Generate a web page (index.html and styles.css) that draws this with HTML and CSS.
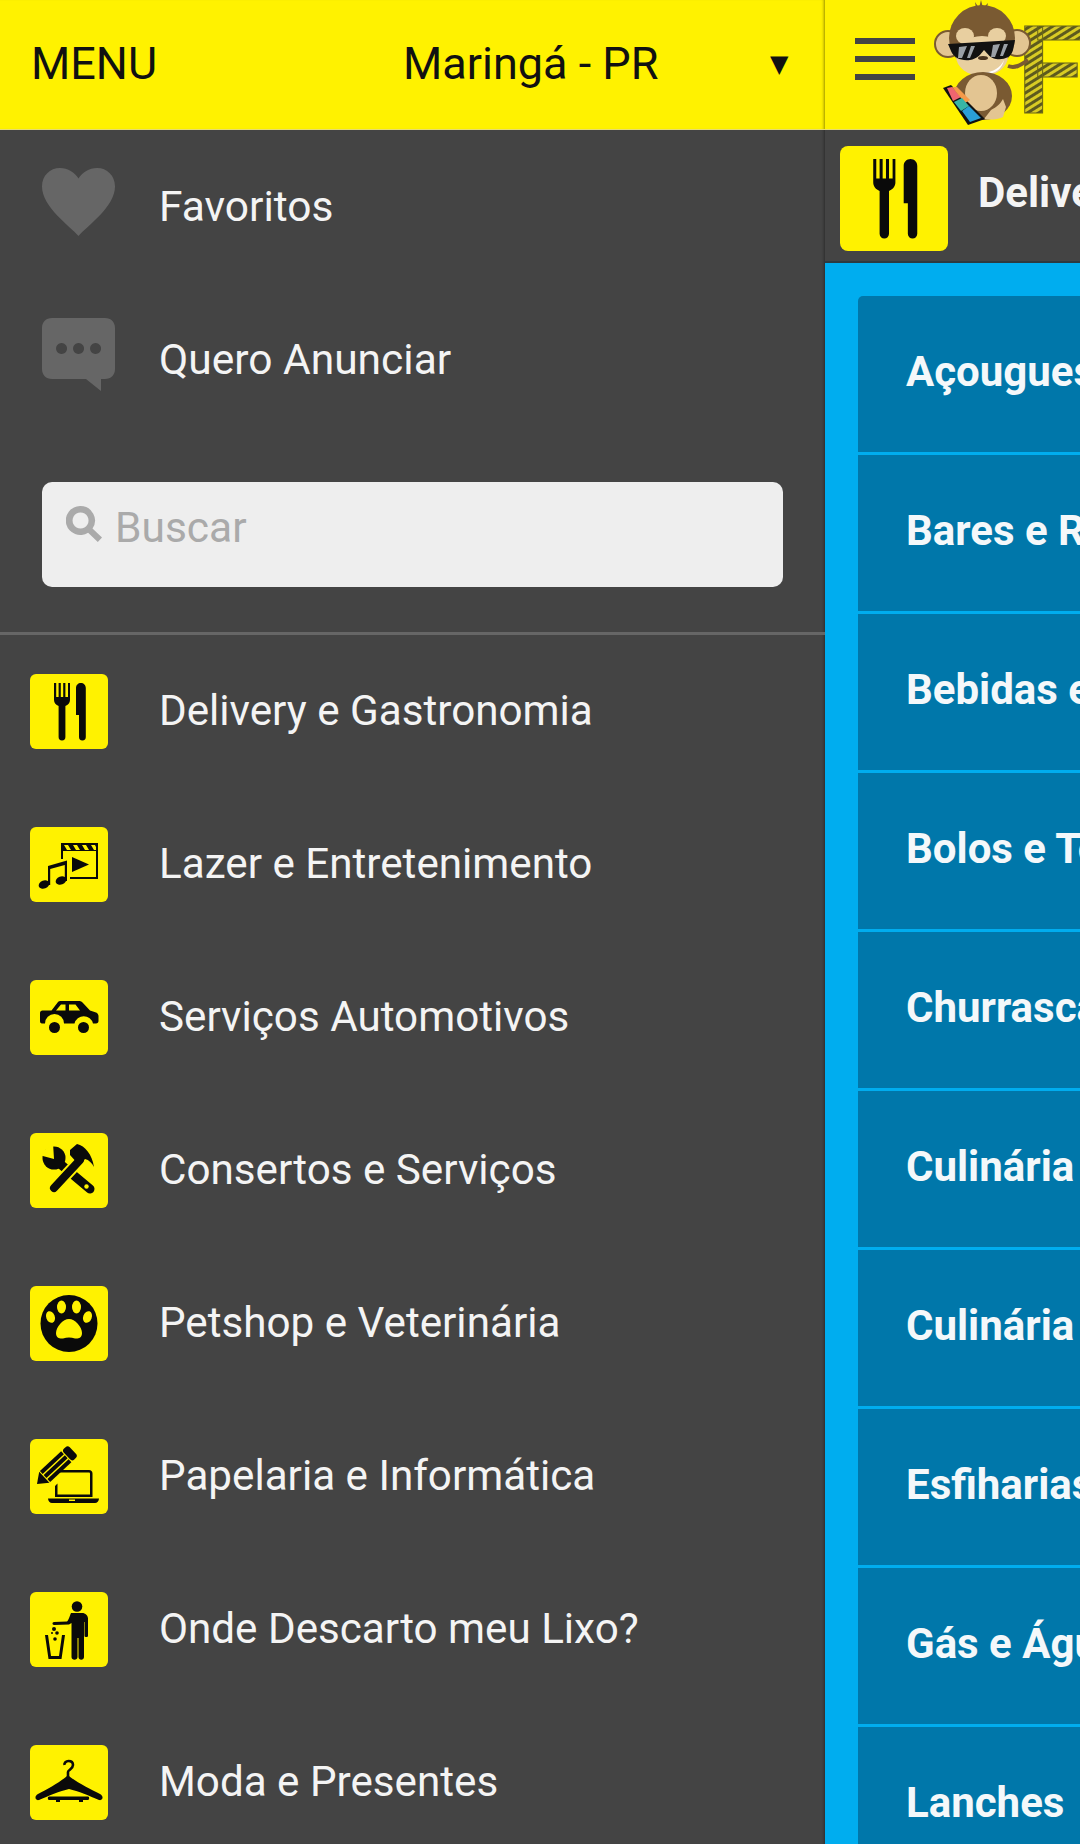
FILE: index.html
```html
<!DOCTYPE html>
<html lang="pt-BR">
<head>
<meta charset="utf-8">
<title>Menu</title>
<link rel="stylesheet" href="styles.css">
</head>
<body>
<svg class="defs" width="0" height="0" aria-hidden="true">
  <defs>
    <symbol id="i-food" viewBox="0 0 78 75">
      <path d="M24 9h2.200v14h2.400V9h2.200v14h2.400V9h2.200v14h2.600V9H40v17c0 3-2 5-4.600 6v31a3.400 3.400 0 0 1-6.800 0V32c-2.600-1-4.600-3-4.600-6z"/>
      <path d="M46 14c0-3 2.200-5 4.900-5s4.900 2 4.900 5v49a3.400 3.400 0 0 1-6.800 0V41h-3z"/>
    </symbol>
    <symbol id="i-media" viewBox="0 0 78 75">
      <path fill-rule="evenodd" d="M31 16h37v36H40v-2h26V24H33v8h-2zM34 18l3 5h4l-3-5zM43 18l3 5h4l-3-5zM52 18l3 5h4l-3-5zM61 18l3 5h2v-3l-1-2z"/>
      <path d="M42 30l17 7.500-17 7.500z"/>
      <path d="M18 39l19-5.500V54h-2.200V38l-14.600 4v16H18z"/>
      <ellipse cx="14" cy="57.500" rx="5.500" ry="4" transform="rotate(-20 14 57.500)"/>
      <ellipse cx="31" cy="53.500" rx="5.500" ry="4" transform="rotate(-20 31 53.500)"/>
    </symbol>
    <symbol id="i-car" viewBox="0 0 78 75">
      <path fill-rule="evenodd" d="M10 33c0-1.500 1-2.500 2.500-2.500h9L28 22c.800-.800 1.500-1 3-1h18c1.500 0 2.500.500 3.500 1.500l7.500 8 6 2c1.500.500 2.500 2 2.500 3.500v5c0 1.500-1 2.500-2.500 2.500h-3a9.500 9.500 0 0 0-18.500 0H34a9.500 9.500 0 0 0-19 0h-3c-1.500 0-2-1-2-2.500zM26 30.500h9.500V24.500H31zM39 24.500v6h11l-4.500-6z"/>
      <circle cx="24.500" cy="47.500" r="5.500"/>
      <circle cx="53.500" cy="47.500" r="5.500"/>
    </symbol>
    <symbol id="i-tools" viewBox="0 0 78 75">
      <path d="M29 30l31 26" stroke="#0a0a0a" stroke-width="9" stroke-linecap="round"/>
      <circle cx="24" cy="25" r="11.500"/>
      <path d="M24 26l-1-16-14 12z" fill="#fff200"/>
      <circle cx="56.500" cy="53.500" r="2.200" fill="#fff200"/>
      <path d="M50 27L24 55" stroke="#fff200" stroke-width="12"/>
      <path d="M50 27L24 55" stroke="#0a0a0a" stroke-width="8" stroke-linecap="round"/>
      <path d="M40 17l7-6c8 2 15 10 17 23-2-4-5-7-9-8l-6 6-9-10z"/>
    </symbol>
    <symbol id="i-paw" viewBox="0 0 78 75">
      <circle cx="39" cy="37.500" r="28.500"/>
      <g fill="#fff200">
        <path d="M39 33c6 0 13 8 13 14 0 5-4 6-7 5.500-2-.4-4-1-6-1s-4 .6-6 1c-3 .5-7-.5-7-5.500 0-6 7-14 13-14z"/>
        <ellipse cx="31.500" cy="21" rx="4.500" ry="6.500"/>
        <ellipse cx="46.500" cy="21" rx="4.500" ry="6.500"/>
        <ellipse cx="20.500" cy="31" rx="4.300" ry="6" transform="rotate(-20 20.500 31)"/>
        <ellipse cx="57.500" cy="31" rx="4.300" ry="6" transform="rotate(20 57.500 31)"/>
      </g>
    </symbol>
    <symbol id="i-office" viewBox="0 0 78 75">
      <g transform="translate(7 45) rotate(-43)">
        <path d="M0 0l10-7.500v15z"/>
        <rect x="11" y="-7.500" width="29" height="4"/>
        <rect x="11" y="-2" width="29" height="4"/>
        <rect x="11" y="3.500" width="29" height="4"/>
        <rect x="41" y="-7.500" width="8" height="15" rx="3"/>
      </g>
      <path fill-rule="evenodd" d="M28 31h31c2 0 3.500 1.500 3.500 3.500V58H25V47l2.500-2.500v11h32.500V34.500c0-.5-.5-1-1-1H27.500z"/>
      <path fill-rule="evenodd" d="M18 59.500h51c0 2.500-2 4.500-4 4.500H22c-2 0-4-2-4-4.500zM39 60.500v1.500h6v-1.500z"/>
    </symbol>
    <symbol id="i-trash" viewBox="0 0 78 75">
      <circle cx="47" cy="14.500" r="5.300"/>
      <path d="M41 21h11c3.500 0 6 2.500 6 5.500v17.500c0 1.400-3.500 1.400-3.500 0V30l-.5 0v35c0 3.600-5.500 3.600-5.500 0V46h-1v19c0 3.600-6 3.600-6 0V31l-2.500 1.500-15 .5c-2 0-2-3 0-3l13-.5c1.500-1 2.500-5 4-8.500z"/>
      <path fill-rule="evenodd" d="M15 43h3l3 21h8l3-21h3l-3.500 24h-13z"/>
      <circle cx="24" cy="37" r="2"/>
      <circle cx="27" cy="41" r="1.800"/>
      <circle cx="25" cy="47" r="1.800"/>
      <circle cx="22" cy="41" r="1"/>
    </symbol>
    <symbol id="i-hanger" viewBox="0 0 78 75">
      <path d="M38 33V27C38 25 43 24 43 20C43 17 40.500 16 38.500 16C36 16 34 18 34.500 20" fill="none" stroke="#0a0a0a" stroke-width="2.600"/>
      <path d="M38 30C44 36 60 44 70 49C74 51 73 56 69 55C60 51 48 46 39 44C30 46 18 51 9 55C5 56 4 51 8 49C18 44 32 36 38 30z"/>
      <path d="M19 51.500h39c1.500 0 1.500 3.500 0 3.500h-5v2h-4v-2H30v2h-4v-2h-7c-1.500 0-1.500-3.500 0-3.500z"/>
    </symbol>
    <pattern id="hatch" width="8" height="6" patternUnits="userSpaceOnUse" patternTransform="rotate(-32)">
      <rect width="8" height="6" fill="#d8cb24"/>
      <rect width="8" height="3" fill="#5d5a1e"/>
    </pattern>
  </defs>
</svg>

<div class="screen">
  <aside class="drawer">
    <header class="drawer-head">
      <span class="menu-label">MENU</span>
      <span class="city">Maringá - PR</span>
      <span class="caret">▼</span>
    </header>

    <a class="top-row">
      <svg class="top-icon" viewBox="0 0 73 68"><path d="M36.500 68C28 58 0 39 0 18.500 0 7.500 8 0 18 0c8 0 14.500 4.500 18.500 10.500C40.500 4.500 47 0 55 0c10 0 18 7.500 18 18.500C73 39 45 58 36.500 68z"/></svg>
      <span>Favoritos</span>
    </a>
    <a class="top-row">
      <svg class="top-icon" viewBox="0 0 73 73"><path fill-rule="evenodd" d="M10 0h53c6 0 10 4 10 10v41c0 6-4 10-10 10h-4v12L44 61H10C4 61 0 57 0 51V10C0 4 4 0 10 0zM19.500 25a5.500 5.500 0 1 0 .1 0zM36.500 25a5.500 5.500 0 1 0 .1 0zM53.500 25a5.500 5.500 0 1 0 .1 0z"/></svg>
      <span>Quero Anunciar</span>
    </a>

    <div class="search">
      <svg class="search-icon" viewBox="0 0 36 36"><path fill-rule="evenodd" d="M14.500 0a14.500 14.500 0 0 1 12 22.600l9.500 9-4.200 4.400-9.700-9.300A14.500 14.500 0 1 1 14.500 0zm0 6.500a8 8 0 1 0 .1 0z"/></svg>
      <span class="search-text">Buscar</span>
    </div>

    <div class="divider"></div>

    <a class="cat-row"><span class="tile"><svg><use href="#i-food"/></svg></span><span>Delivery e Gastronomia</span></a>
    <a class="cat-row"><span class="tile"><svg><use href="#i-media"/></svg></span><span>Lazer e Entretenimento</span></a>
    <a class="cat-row"><span class="tile"><svg><use href="#i-car"/></svg></span><span>Serviços Automotivos</span></a>
    <a class="cat-row"><span class="tile"><svg><use href="#i-tools"/></svg></span><span>Consertos e Serviços</span></a>
    <a class="cat-row"><span class="tile"><svg><use href="#i-paw"/></svg></span><span>Petshop e Veterinária</span></a>
    <a class="cat-row"><span class="tile"><svg><use href="#i-office"/></svg></span><span>Papelaria e Informática</span></a>
    <a class="cat-row"><span class="tile"><svg><use href="#i-trash"/></svg></span><span>Onde Descarto meu Lixo?</span></a>
    <a class="cat-row"><span class="tile"><svg><use href="#i-hanger"/></svg></span><span>Moda e Presentes</span></a>
  </aside>

  <main class="panel">
    <header class="panel-head">
      <div class="burger"><i></i><i></i><i></i></div>
      <svg class="logo" viewBox="925 0 155 130">
        <text class="logo-f" x="1012" y="113" fill="url(#hatch)" stroke="#6b6616" stroke-width="1">F</text>
        <path d="M1003 66c8 3 14-2 20-6" fill="none" stroke="#7a5a32" stroke-width="4"/>
        <path d="M972 14l-2-12 4 6 2-8 2 8 5-5-2 9z" fill="#7a5a32"/>
        <circle cx="943" cy="44" r="13" fill="#e3c592" stroke="#7a5a32" stroke-width="2"/>
        <circle cx="1012" cy="43" r="13" fill="#e3c592" stroke="#7a5a32" stroke-width="2"/>
        <circle cx="977" cy="38" r="33" fill="#7a5a32"/>
        <ellipse cx="977" cy="56" rx="26" ry="20" fill="#e8cfa0"/>
        <ellipse cx="960" cy="36" rx="9" ry="8" fill="#e8cfa0"/>
        <ellipse cx="992" cy="36" rx="9" ry="8" fill="#e8cfa0"/>
        <path d="M975 72c10 2 20-3 24-12-2 9-9 14-18 14z" fill="#fff"/>
        <path d="M943 44l67-4-2 10c-2 8-10 10-17 9-6-1-8-5-12-9-3 4-7 9-14 10-9 1-16-2-19-9z" fill="#111"/>
        <path d="M954 47l8-1-5 12h-4zM966 46l4 0-5 12h-3zM988 45l7-1-5 13h-4zM999 44l4 0-5 12h-3z" fill="#9aa0a6"/>
        <ellipse cx="978" cy="58" rx="5" ry="2" fill="#4a3520"/>
        <ellipse cx="978" cy="96" rx="29" ry="24" fill="#7a5a32"/>
        <ellipse cx="976" cy="93" rx="16" ry="18" fill="#e3c592"/>
        <path d="M986 110c6-3 9-6 12-11l3 8-3 10c-6 3-14 3-19 2z" fill="#e3c592"/>
        <path d="M938 88l8-3 34 34-17 6z" fill="#111"/>
        <path d="M942 88l5-1 9 10-8 4z" fill="#f0656f"/>
        <path d="M947 87l5 0 13 13-5 3z" fill="#f59a4a"/>
        <path d="M949 102l8-4 7 8-8 5z" fill="#38b5a6"/>
        <path d="M957 111l7-5 12 12-11 4z" fill="#2a9fd8"/>
      </svg>
    </header>
    <div class="section-bar">
      <span class="tile tile-big"><svg><use href="#i-food"/></svg></span>
      <span class="section-title">Delivery e Gastronomia</span>
    </div>
    <div class="sub-list">
      <a class="sub-row">Açougues e Peixarias</a>
      <a class="sub-row">Bares e Restaurantes</a>
      <a class="sub-row">Bebidas e Conveniências</a>
      <a class="sub-row">Bolos e Tortas</a>
      <a class="sub-row">Churrascarias</a>
      <a class="sub-row">Culinária Japonesa</a>
      <a class="sub-row">Culinária Italiana</a>
      <a class="sub-row">Esfiharias</a>
      <a class="sub-row">Gás e Água</a>
      <a class="sub-row">Lanches</a>
    </div>
  </main>
</div>
</body>
</html>
```
FILE: styles.css
```css
* { box-sizing: border-box; }
html, body { margin: 0; padding: 0; }
body { width: 1080px; height: 1844px; overflow: hidden; font-family: Roboto, "Liberation Sans", sans-serif; background: #444; }
.defs { position: absolute; }
.screen { display: flex; width: 1080px; height: 1844px; overflow: hidden; }

.drawer { flex: 0 0 825px; width: 825px; height: 1844px; overflow: hidden; background: #444; color: #f4f4f4; box-shadow: inset -3px 0 3px -2px rgba(0,0,0,.35); }
.drawer-head { display: flex; align-items: center; height: 130px; padding: 0 0 2px 31px; background: #fff200; color: #111; border-bottom: 1px solid #e8dc70; box-shadow: inset -3px 0 3px -2px rgba(0,0,0,.4); }
.menu-label { width: 372px; font-size: 45px; font-weight: 400; }
.city { width: 367px; font-size: 45px; font-weight: 400; }
.caret { font-family: "DejaVu Sans", sans-serif; font-size: 24px; color: #111; }

.top-row { display: flex; align-items: center; gap: 44px; height: 153px; padding-left: 42px; font-size: 42.500px; }
.top-icon { width: 73px; height: auto; fill: #666; flex: none; margin-bottom: 10px; }
.search { display: flex; align-items: flex-start; gap: 13px; width: 741px; height: 105px; margin: 46px 0 45px 42px; padding: 24px 0 0 24px; background: #eee; border-radius: 10px; color: #aaa; font-size: 42.500px; }
.search-icon { width: 36px; height: 36px; fill: #aaa; flex: none; }
.search-text { line-height: 44px; }
.divider { height: 3px; background: #666; }
.cat-row { display: flex; align-items: center; gap: 51px; height: 153px; padding: 0 0 0 30px; font-size: 42.200px; white-space: nowrap; }
.cat-row span:last-child { margin-top: -2px; }

.tile { display: block; flex: none; width: 78px; height: 75px; background: #fff200; border-radius: 6px; }
.tile svg { display: block; width: 100%; height: 100%; fill: #0a0a0a; }
.tile-big { width: 108px; height: 105px; border-radius: 8px; }

.panel { flex: 0 0 255px; width: 255px; height: 1844px; overflow: hidden; background: #00adef; }
.panel-head { display: flex; align-items: center; gap: 15px; height: 130px; padding-left: 30px; background: #fff200; border-bottom: 1px solid #e8dc70; }
.burger { display: flex; flex-direction: column; gap: 12px; width: 60px; flex: none; margin-bottom: 12px; }
.burger i { display: block; height: 6px; background: #444; }
.logo { width: 155px; height: 130px; flex: none; }
.logo-f { font-family: Roboto, sans-serif; font-weight: 700; font-size: 122px; }

.section-bar { display: flex; align-items: center; gap: 30px; width: 255px; height: 133px; padding: 5px 0 0 15px; background: #444; border-bottom: 2px solid #2d3a40; }
.section-title { font-size: 42px; font-weight: 700; color: #f4f4f4; white-space: nowrap; margin-top: -11px; }

.sub-list { display: flex; flex-direction: column; gap: 3px; width: 500px; margin-left: 33px; padding-top: 33px; }
.sub-row { display: flex; align-items: center; height: 156px; flex: none; padding: 0 0 6px 48px; background: #0077aa; color: #f4f8fa; font-size: 42px; font-weight: 700; white-space: nowrap; }
.sub-row:first-child { border-top-left-radius: 5px; }
```
